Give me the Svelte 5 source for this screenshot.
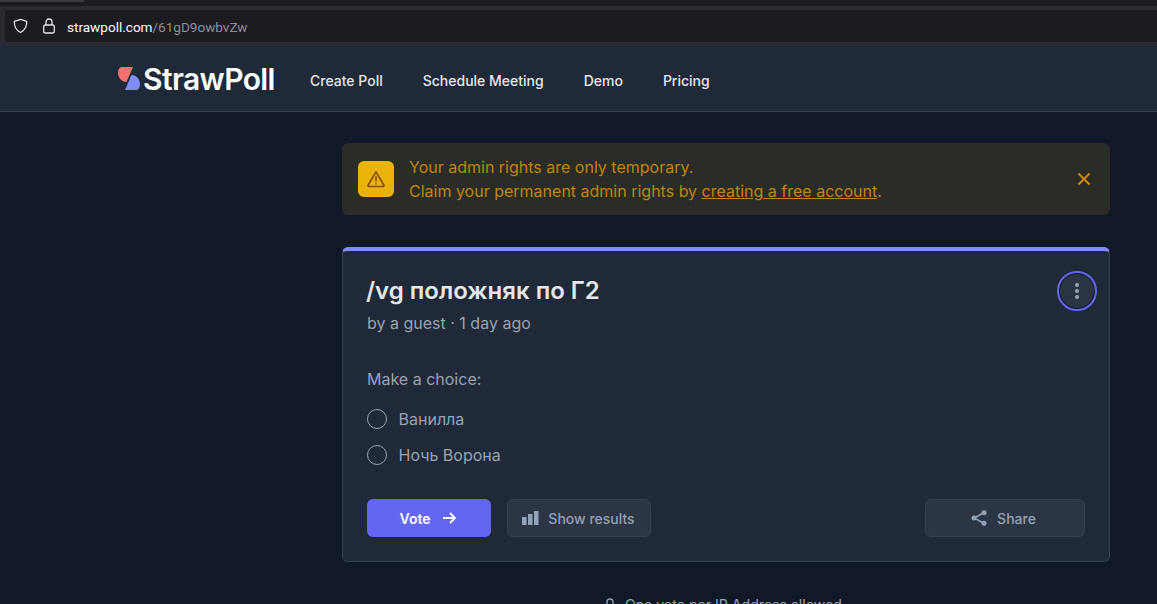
<script>
  const nav = ['Create Poll', 'Schedule Meeting', 'Demo', 'Pricing'];
  const options = ['Ванилла', 'Ночь Ворона'];
</script>

<div class="page">
  <div class="chrome">
    <div class="tabstrip"><div class="tabstub"></div></div>
    <div class="urlbar">
      <svg class="shield" viewBox="0 0 16 16" width="15" height="16"><path d="M8 1 14.600 3c.2 5.600-1.800 9.600-6.600 12C3.200 12.600 1.200 8.600 1.400 3Z" fill="none" stroke="#e6e6e8" stroke-width="1.300" stroke-linejoin="round"/></svg>
      <svg class="lock" viewBox="0 0 12 16" width="12" height="16"><path d="M3 7V4a3 3 0 0 1 6 0V7" fill="none" stroke="#e6e6e8" stroke-width="1.300"/><rect x=".7" y="7" width="10.600" height="8" rx="1.500" fill="none" stroke="#e6e6e8" stroke-width="1.300"/></svg>
      <span class="url">strawpoll.com<span class="path">/61gD9owbvZw</span></span>
    </div>
  </div>

  <header class="nav">
    <div class="logo">
      <svg viewBox="0 0 24 24" width="24" height="24" class="mark">
        <path d="M5 0H16L9.500 15C4.500 15 1 10.500 1 6 1 2.500 2.500 0 5 0Z" fill="#f47070"/>
        <path d="M8 23 14.500 8C19.500 8 23 12.500 23 17 23 20.500 21.500 23 19 23Z" fill="#818cf8"/>
      </svg>
      <span class="wordmark">StrawPoll</span>
    </div>
    <nav class="links">
      {#each nav as item}
        <span class="link">{item}</span>
      {/each}
    </nav>
  </header>

  <main class="main">
    <div class="alert">
      <div class="badge">
        <svg viewBox="0 0 24 24" width="20" height="20" fill="none" stroke="#854d0e" stroke-width="2" stroke-linecap="round" stroke-linejoin="round"><path d="M12 3.500 2.500 19.500a1 1 0 0 0 .9 1.500h17.200a1 1 0 0 0 .9-1.500Z"/><path d="M12 9.500v4.500M12 17.500v.1"/></svg>
      </div>
      <div class="alert-text">
        <p>Your admin rights are only temporary.</p>
        <p>Claim your permanent admin rights by <u>creating a free account</u>.</p>
      </div>
      <svg class="close" viewBox="0 0 14 14" width="14" height="14"><path d="M1.500 1.500l11 11M12.500 1.500l-11 11" stroke="#ca8a04" stroke-width="2" fill="none"/></svg>
    </div>

    <section class="card">
      <button class="more" aria-label="More">
        <span></span><span></span><span></span>
      </button>
      <h1>/vg положняк по Г2</h1>
      <div class="meta">by a guest · 1 day ago</div>
      <div class="prompt">Make a choice:</div>
      <div class="options">
        {#each options as o}
          <div class="option"><span class="radio"></span><span>{o}</span></div>
        {/each}
      </div>
      <div class="actions">
        <button class="vote">Vote
          <svg viewBox="0 0 14 14" width="14" height="14" fill="none" stroke="#fff" stroke-width="1.800"><path d="M0 7h12M7 2l5 5-5 5"/></svg>
        </button>
        <button class="ghost results">
          <svg viewBox="0 0 17 14" width="17" height="14" fill="#94a3b8"><rect x="0" y="6" width="4.500" height="8"/><rect x="6" y="3" width="4.500" height="11"/><rect x="12" y="0" width="4.500" height="14"/></svg>
          Show results
        </button>
        <button class="ghost share">
          <svg viewBox="0 0 16 16" width="16" height="16" fill="#94a3b8" stroke="#94a3b8"><circle cx="3" cy="8" r="2.500" stroke="none"/><circle cx="13" cy="2.800" r="2.500" stroke="none"/><circle cx="13" cy="13.200" r="2.500" stroke="none"/><path d="M3 8 13 2.800M3 8l10 5.200" stroke-width="1.600"/></svg>
          Share
        </button>
      </div>
    </section>

    <div class="foot">
      <svg viewBox="0 0 14 16" width="12" height="14" fill="#94a3b8"><path d="M3.500 7V4.500a3.500 3.500 0 0 1 7 0V7" fill="none" stroke="#94a3b8" stroke-width="1.500"/><rect x="1.500" y="7" width="11" height="8" rx="1.500"/></svg>
      <span>One vote per IP Address allowed.</span>
    </div>
  </main>
</div>

<style>
  :global(body) {
    margin: 0;
    background: #111827;
    overflow: hidden;
  }
  .page {
    height: 604px;
    overflow: hidden;
    font-family: Inter, "Liberation Sans", sans-serif;
    background: #111827;
  }
  .chrome {
    height: 46px;
    background: #2b2a33;
    box-sizing: border-box;
  }
  .tabstrip {
    height: 6px;
    background: #1c1b22;
  }
  .tabstub {
    width: 84px;
    height: 2px;
    background: #3a3944;
  }
  .urlbar {
    height: 32px;
    margin: 4px 0 0 5px;
    border-radius: 4px 0 0 4px;
    background: #1c1b22;
    display: flex;
    align-items: center;
    padding-left: 8px;
    font-family: Roboto, "Noto Sans", sans-serif;
  }
  .shield { margin-right: 15px; }
  .lock { margin-right: 12px; }
  .url { color: #fbfbfe; font-size: 13.55px; padding-top: 2px; }
  .path { color: #8f8f95; }

  .nav {
    height: 66px;
    box-sizing: border-box;
    background: #1f2937;
    border-bottom: 1px solid #374151;
    display: flex;
    align-items: center;
    padding: 4px 0 0 117px;
  }
  .logo {
    display: flex;
    align-items: center;
    width: 193px;
    color: #fff;
    margin-bottom: 3px;
  }
  .mark { margin-right: 2px; }
  .wordmark {
    font-size: 30px;
    line-height: 32px;
    font-weight: 600;
    letter-spacing: -0.6px;
  }
  .links { display: flex; gap: 40px; }
  .link {
    font-size: 14px;
    font-weight: 500;
    color: #e5e7eb;
  }

  .main {
    width: 768px;
    margin-left: 342px;
    padding-top: 31px;
  }
  .alert {
    height: 72px;
    box-sizing: border-box;
    background: #2c2c26;
    border-radius: 6px;
    display: flex;
    align-items: center;
    padding: 0 16px;
  }
  .badge {
    width: 36px;
    height: 36px;
    border-radius: 6px;
    background: #eab308;
    display: flex;
    align-items: center;
    justify-content: center;
    margin-right: 15px;
    flex: none;
  }
  .alert-text {
    flex: 1;
    color: #bd8709;
    font-size: 16px;
    line-height: 24px;
  }
  .alert-text p { margin: 0; }
  .close { margin-right: 3px; }

  .card {
    position: relative;
    margin-top: 32px;
    height: 315px;
    box-sizing: border-box;
    background: #1f2937;
    border: 1px solid #374151;
    border-top: 4px solid #818cf8;
    border-radius: 6px;
    padding: 24px 24px 0;
  }
  .more {
    position: absolute;
    top: 20px;
    right: 12px;
    width: 40px;
    height: 40px;
    box-sizing: border-box;
    border-radius: 50%;
    border: 2px solid #6366f1;
    box-shadow: inset 0 0 0 1px #111827;
    background: #2a3544;
    display: flex;
    flex-direction: column;
    align-items: center;
    justify-content: center;
    gap: 2px;
    padding: 0;
  }
  .more span {
    width: 4px;
    height: 4px;
    border-radius: 50%;
    background: #9ca3af;
  }
  h1 {
    margin: 0 0 0 -1px;
    font-size: 24px;
    line-height: 32px;
    font-weight: 600;
    color: #e5e7eb;
  }
  .meta {
    margin-top: 4px;
    font-size: 16px;
    line-height: 24px;
    color: #9ca3af;
  }
  .prompt {
    margin-top: 32px;
    font-size: 16px;
    line-height: 24px;
    color: #9ca3af;
  }
  .options {
    margin-top: 18px;
    display: flex;
    flex-direction: column;
    gap: 16px;
  }
  .option {
    display: flex;
    align-items: center;
    height: 20px;
    font-size: 16px;
    color: #9ca3af;
  }
  .radio {
    width: 20px;
    height: 20px;
    box-sizing: border-box;
    border: 1px solid #9ca3af;
    border-radius: 50%;
    margin-right: 11.5px;
  }
  .actions {
    margin-top: 34px;
    display: flex;
    gap: 16px;
  }
  button { font-family: inherit; }
  .vote {
    width: 124px;
    height: 38px;
    border: 0;
    border-radius: 6px;
    background: #6366f1;
    color: #fff;
    font-size: 14px;
    font-weight: 600;
    display: flex;
    align-items: center;
    justify-content: center;
    gap: 12px;
    padding: 0 2px 0 0;
  }
  .ghost {
    height: 38px;
    box-sizing: border-box;
    border: 1px solid #374151;
    border-radius: 6px;
    background: #2b3543;
    color: #94a3b8;
    font-size: 14px;
    font-weight: 500;
    display: flex;
    align-items: center;
    justify-content: center;
    gap: 9px;
    padding: 0 1px 0 0;
  }
  .results { width: 144px; }
  .share { width: 160px; margin-left: auto; gap: 10px; padding-right: 3px; }
  .foot {
    margin-top: 34px;
    margin-left: -2px;
    display: flex;
    justify-content: center;
    align-items: center;
    gap: 9px;
    font-size: 14.1px;
    color: #9ca3af;
  }
</style>
